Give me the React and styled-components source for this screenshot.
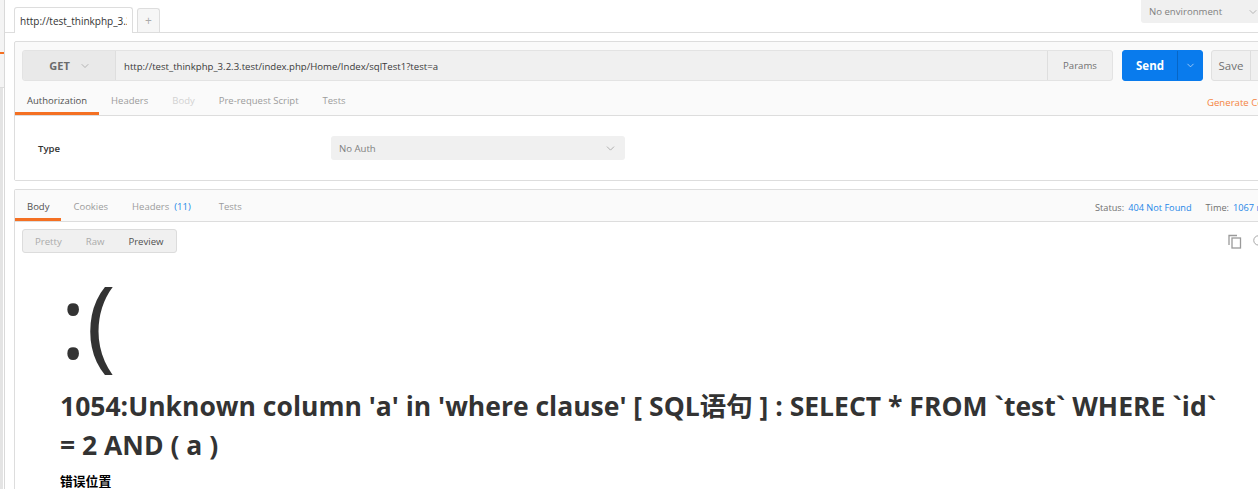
import styled, { createGlobalStyle } from "styled-components";
import { ChevronDown, Search } from "lucide-react";

const ORANGE = "#f47023";
const BLUE = "#1f87e8";

const GlobalStyle = createGlobalStyle`
  html, body {
    margin: 0;
    padding: 0;
    overflow: hidden;
    background: #fff;
  }
  body {
    font-family: "Open Sans", "Noto Sans CJK SC", sans-serif;
  }
  * {
    box-sizing: border-box;
  }
`;

const Shell = styled.div`
  display: flex;
  width: 1300px;
  height: 100vh;
`;

const Sidebar = styled.div`
  width: 5px;
  display: flex;
  flex-direction: column;
  border-right: 1px solid #d9d9d9;
`;

const SidebarTop = styled.div`
  height: 88px;
  padding-top: 52px;
  background: #f4f4f4;
  border-bottom: 1px solid #dcdcdc;
`;

const SidebarMarker = styled.div`
  height: 2px;
  background: ${ORANGE};
`;

const SidebarList = styled.div`
  flex: 1;
  width: 3px;
  background: #e4e4e4;
`;

const Main = styled.div`
  width: 1290px;
  display: flex;
  flex-direction: column;
`;

const TopBar = styled.div`
  height: 33px;
  display: flex;
  align-items: flex-end;
  padding-left: 9px;
  border-bottom: 1px solid #dddddd;
`;

const FileTab = styled.div`
  width: 119px;
  height: 26px;
  margin-bottom: -1px;
  padding: 0 5px;
  display: flex;
  align-items: center;
  background: #fff;
  border: 1px solid #dddddd;
  border-bottom: none;
  border-radius: 3px 3px 0 0;
`;

const FileTabTitle = styled.span`
  display: block;
  width: 108px;
  overflow: hidden;
  white-space: nowrap;
  font-size: 10px;
  color: #333;
`;

const PlusTab = styled.div`
  width: 23px;
  height: 24px;
  margin-left: 4px;
  display: flex;
  align-items: center;
  justify-content: center;
  background: #f6f6f6;
  border: 1px solid #dddddd;
  border-bottom: none;
  border-radius: 3px 3px 0 0;
  font-size: 12px;
  color: #aaa;
`;

const EnvSelect = styled.div`
  align-self: flex-start;
  margin-left: auto;
  margin-right: 30px;
  width: 124px;
  height: 23px;
  padding: 0 6px 0 8px;
  display: flex;
  align-items: center;
  justify-content: space-between;
  background: #f0f0f0;
  border-radius: 0 0 3px 3px;
  font-size: 9.6px;
  color: #808080;
`;

const Content = styled.div`
  flex: 1;
  min-height: 0;
  display: flex;
  flex-direction: column;
  gap: 8px;
  padding: 8px 11px 0 9px;
`;

const RequestPanel = styled.div`
  border: 1px solid #dddddd;
  border-radius: 2px;
  background: #fafafa;
`;

const UrlRow = styled.div`
  display: flex;
  padding: 8px 7px 0;
`;

const UrlBar = styled.div`
  flex: 1;
  height: 31px;
  display: flex;
  background: #f0f0f0;
  border: 1px solid #e3e3e3;
  border-radius: 3px;
  overflow: hidden;
`;

const Method = styled.div`
  width: 93px;
  display: flex;
  align-items: center;
  justify-content: center;
  gap: 9px;
  background: #e9e9e9;
  border-right: 1px solid #dedede;
  font-size: 11px;
  font-weight: 700;
  color: #6b6b6b;
  padding-left: 2px;
`;

const UrlText = styled.div`
  flex: 1;
  display: flex;
  align-items: center;
  padding: 1px 0 0 8px;
  font-size: 9.6px;
  color: #3a3a3a;
`;

const ParamsButton = styled.div`
  width: 65px;
  display: flex;
  align-items: center;
  justify-content: center;
  border-left: 1px solid #dedede;
  font-size: 9.6px;
  color: #707070;
`;

const SplitButton = styled.div`
  height: 31px;
  margin-left: ${(p) => p.$gap}px;
  display: flex;
  border-radius: 3px;
  overflow: hidden;
  background: ${(p) => (p.$primary ? "#097bed" : "#f0f0f0")};
  border: 1px solid ${(p) => (p.$primary ? "#097bed" : "#e0e0e0")};
  color: ${(p) => (p.$primary ? "#fff" : "#707070")};
`;

const SplitMain = styled.div`
  width: ${(p) => p.$w}px;
  display: flex;
  align-items: center;
  justify-content: center;
  font-size: 11.5px;
  font-weight: ${(p) => (p.$bold ? 700 : 400)};
`;

const SplitArrow = styled.div`
  width: 25px;
  display: flex;
  align-items: center;
  justify-content: center;
  border-left: 1px solid ${(p) => (p.$primary ? "#0766c6" : "#dddddd")};
`;

const TabsRow = styled.div`
  height: ${(p) => p.$h}px;
  display: flex;
  align-items: flex-end;
  background: #fafafa;
  border-bottom: 1px solid #dddddd;
`;

const Tab = styled.div`
  padding: ${(p) => p.$top}px 12px 4px;
  line-height: 14px;
  font-size: 9.5px;
  white-space: nowrap;
  color: ${(p) => (p.$active ? "#505050" : p.$disabled ? "#d2d2d2" : "#9c9c9c")};
  border-bottom: 3px solid ${(p) => (p.$active ? ORANGE : "transparent")};
`;

const Count = styled.span`
  color: ${BLUE};
  margin: 0 4px 0 5px;
`;

const GenerateLink = styled.div`
  margin-left: auto;
  padding: 0 0 5px 0;
  width: 76px;
  line-height: 14px;
  font-size: 9.6px;
  color: #f5843f;
  white-space: nowrap;
`;

const AuthBody = styled.div`
  height: 64px;
  display: flex;
  align-items: center;
  padding-left: 23px;
  background: #fff;
`;

const FieldLabel = styled.div`
  width: 293px;
  font-size: 9.6px;
  font-weight: 600;
  color: #333;
`;

const SelectBox = styled.div`
  width: 294px;
  height: 24px;
  padding: 0 8px;
  display: flex;
  align-items: center;
  justify-content: space-between;
  background: #f0f0f0;
  border-radius: 3px;
  font-size: 9.6px;
  color: #808080;
`;

const ResponsePanel = styled.div`
  flex: 1;
  min-height: 0;
  display: flex;
  flex-direction: column;
  border: 1px solid #dddddd;
  border-bottom: none;
  border-radius: 2px 2px 0 0;
  background: #fff;
  overflow: hidden;
`;

const StatusBar = styled.div`
  margin-left: auto;
  width: 188px;
  padding: 0 0 6px 0;
  display: flex;
  gap: 14px;
  line-height: 14px;
  font-size: 9.2px;
  white-space: nowrap;
`;

const Stat = styled.span`
  color: #707070;
`;

const StatValue = styled.span`
  color: ${BLUE};
  margin-left: 4px;
`;

const ResBody = styled.div`
  padding: 7px 7px 0;
`;

const Toolbar = styled.div`
  display: flex;
  align-items: center;
  justify-content: space-between;
`;

const Segmented = styled.div`
  height: 24px;
  display: flex;
  background: #f0f0f0;
  border: 1px solid #dcdcdc;
  border-radius: 3px;
`;

const Segment = styled.div`
  padding: 0 12px;
  display: flex;
  align-items: center;
  font-size: 9.6px;
  color: ${(p) => (p.$active ? "#505050" : "#ababab")};
`;

const ToolIcons = styled.div`
  display: flex;
  align-items: center;
  gap: 10px;
  margin-right: 10px;
  color: #9a9a9a;
`;

const ErrorPage = styled.div`
  padding: 7px 38px 0;
  font-family: "Open Sans", "Noto Sans CJK SC", sans-serif;
  color: #333;
`;

const Face = styled.p`
  margin: 0 0 7px;
  font-size: 100px;
  line-height: 120px;
  font-weight: 400;
`;

const Message = styled.h1`
  margin: 0;
  max-width: 1166px;
  font-size: 26.5px;
  line-height: 38.6px;
  font-weight: 700;
`;

const InfoTitle = styled.h3`
  margin: 8px 0 0;
  font-size: 12.8px;
  line-height: 19px;
  font-weight: 700;
  color: #000;
`;

const CopyIcon = () => (
  <svg width="14" height="15" viewBox="0 0 14 15" fill="none" stroke="currentColor" strokeWidth="1.3">
    <path d="M1 11V1.5h8" />
    <rect x="4" y="4" width="8.5" height="10" />
  </svg>
);

const Chevron = ({ color = "#a0a0a0", size = 12 }) => (
  <ChevronDown size={size} color={color} strokeWidth={1.5} />
);

export default function App() {
  return (
    <>
      <GlobalStyle />
      <Shell>
        <Sidebar>
          <SidebarTop>
            <SidebarMarker />
          </SidebarTop>
          <SidebarList />
        </Sidebar>
        <Main>
          <TopBar>
            <FileTab>
              <FileTabTitle>http://test_thinkphp_3.2.3</FileTabTitle>
            </FileTab>
            <PlusTab>+</PlusTab>
            <EnvSelect>
              No environment
              <Chevron />
            </EnvSelect>
          </TopBar>
          <Content>
            <RequestPanel>
              <UrlRow>
                <UrlBar>
                  <Method>
                    GET
                    <Chevron />
                  </Method>
                  <UrlText>http://test_thinkphp_3.2.3.test/index.php/Home/Index/sqlTest1?test=a</UrlText>
                  <ParamsButton>Params</ParamsButton>
                </UrlBar>
                <SplitButton $primary $gap={9}>
                  <SplitMain $w={54} $bold>Send</SplitMain>
                  <SplitArrow $primary>
                    <Chevron color="#d6e8fb" size={11} />
                  </SplitArrow>
                </SplitButton>
                <SplitButton $gap={8}>
                  <SplitMain $w={38}>Save</SplitMain>
                  <SplitArrow>
                    <Chevron size={11} />
                  </SplitArrow>
                </SplitButton>
              </UrlRow>
              <TabsRow $h={35}>
                <Tab $top={13} $active>Authorization</Tab>
                <Tab $top={13}>Headers</Tab>
                <Tab $top={13} $disabled>Body</Tab>
                <Tab $top={13}>Pre-request Script</Tab>
                <Tab $top={13}>Tests</Tab>
                <GenerateLink>Generate Code</GenerateLink>
              </TabsRow>
              <AuthBody>
                <FieldLabel>Type</FieldLabel>
                <SelectBox>
                  No Auth
                  <Chevron size={13} />
                </SelectBox>
              </AuthBody>
            </RequestPanel>

            <ResponsePanel>
              <TabsRow $h={33}>
                <Tab $top={10} $active>Body</Tab>
                <Tab $top={10}>Cookies</Tab>
                <Tab $top={10}>
                  Headers<Count>(11)</Count>
                </Tab>
                <Tab $top={10}>Tests</Tab>
                <StatusBar>
                  <Stat>
                    Status:<StatValue>404 Not Found</StatValue>
                  </Stat>
                  <Stat>
                    Time:<StatValue>1067 ms</StatValue>
                  </Stat>
                </StatusBar>
              </TabsRow>
              <ResBody>
                <Toolbar>
                  <Segmented>
                    <Segment>Pretty</Segment>
                    <Segment>Raw</Segment>
                    <Segment $active>Preview</Segment>
                  </Segmented>
                  <ToolIcons>
                    <CopyIcon />
                    <Search size={14} strokeWidth={1.5} />
                  </ToolIcons>
                </Toolbar>
                <ErrorPage>
                  <Face>:(</Face>
                  <Message>
                    1054:Unknown column 'a' in 'where clause' [ SQL语句 ] : SELECT * FROM `test` WHERE `id` = 2 AND ( a )
                  </Message>
                  <InfoTitle>错误位置</InfoTitle>
                </ErrorPage>
              </ResBody>
            </ResponsePanel>
          </Content>
        </Main>
      </Shell>
    </>
  );
}
